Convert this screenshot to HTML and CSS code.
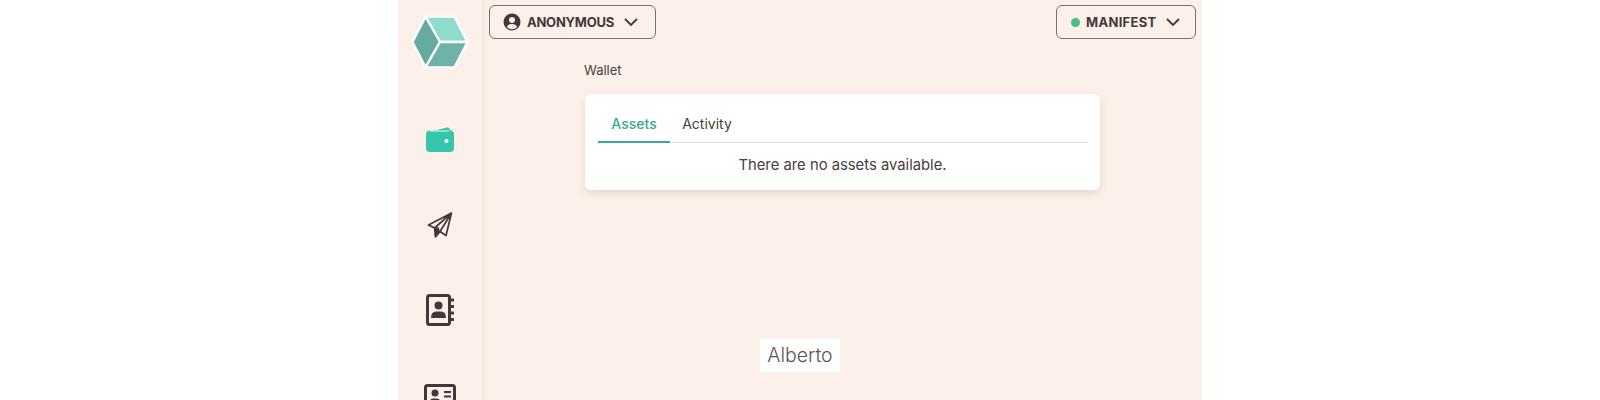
FILE: index.html
```html
<!DOCTYPE html>
<html lang="en">
<head>
    <meta charset="UTF-8">
    <meta name="viewport" content="width=device-width, initial-scale=1.0">
    <title>Wallet</title>
    <link rel="stylesheet" href="styles.css">
</head>
<body>
    <div class="app">
        <nav class="sidebar">
            <svg class="logo" width="58" height="54" viewBox="0 0 56 52">
                <polygon points="14,1.500 42,1.500 54.500,26 28,26" fill="#8fdccf" stroke="#fff" stroke-width="2.200"/>
                <polygon points="14,1.500 28,26 14,50.500 1.500,26" fill="#65aba0" stroke="#fff" stroke-width="2.200"/>
                <polygon points="28,26 54.500,26 42,50.500 14,50.500" fill="#6fb3a8" stroke="#fff" stroke-width="2.200"/>
            </svg>
            <svg class="nav-icon wallet" width="28" height="25" viewBox="0 0 28 25">
                <path d="M3 5 L21 0.500 Q23.500 0 24.500 4 Z" fill="#36c5ad"/>
                <rect x="0" y="3.500" width="28" height="21.500" rx="4" fill="#36c5ad"/>
                <path d="M4 4 H23" stroke="#e9f8f4" stroke-width="1"/>
                <circle cx="20.500" cy="14" r="2" fill="#fff"/>
            </svg>
            <svg class="nav-icon send" width="26" height="26" viewBox="0 0 26 26">
                <path d="M24.500 1 L1.500 13 L7.500 16 L8.500 25 L13 19.500 L19 23.500 Z M24.500 1 L7.500 16 M24.500 1 L13 19.500" fill="none" stroke="#46363a" stroke-width="1.700" stroke-linejoin="round"/>
                <path d="M7.500 16 L8.500 25 L13 19.500 L11.500 15 Z" fill="#46363a"/>
            </svg>
            <svg class="nav-icon book" width="28" height="32" viewBox="0 0 28 32">
                <rect x="1.500" y="1.500" width="22" height="29" rx="2" fill="none" stroke="#46363a" stroke-width="3"/>
                <circle cx="12.500" cy="11.500" r="4" fill="#46363a"/>
                <path d="M5 24 Q5 17.500 10 17.500 H15 Q20 17.500 20 24 Z" fill="#46363a"/>
                <path d="M25 6 H27 M25 12.500 H27 M25 19 H27 M25 25.500 H27" stroke="#46363a" stroke-width="3" stroke-linecap="round"/>
            </svg>
            <svg class="nav-icon card" width="32" height="26" viewBox="0 0 32 26">
                <rect x="1.500" y="1.500" width="29" height="23" rx="2" fill="none" stroke="#46363a" stroke-width="3"/>
                <circle cx="11" cy="9" r="3.500" fill="#46363a"/>
                <path d="M5 21 Q5 14.500 9 14.500 H13 Q17 14.500 17 21 Z" fill="#46363a"/>
                <path d="M20 8 H27 M20 12.500 H27 M20 17 H27" stroke="#46363a" stroke-width="2"/>
            </svg>
        </nav>
        <main class="main">
            <header class="topbar">
                <button class="pill pill-account">
                    <svg width="18" height="18" viewBox="0 0 18 18">
                        <circle cx="9" cy="9" r="8.500" fill="#46363a"/>
                        <circle cx="9" cy="7" r="3" fill="#fcf1ea"/>
                        <path d="M3.800 14 Q5 11 9 11 Q13 11 14.200 14 Q12 16.200 9 16.200 Q6 16.200 3.800 14 Z" fill="#fcf1ea"/>
                    </svg>
                    <span class="pill-user">ANONYMOUS</span>
                    <svg class="chev" width="14" height="8" viewBox="0 0 14 8">
                        <path d="M1 1 L7 7 L13 1" fill="none" stroke="#46363a" stroke-width="1.800"/>
                    </svg>
                </button>
                <button class="pill pill-net">
                    <i class="dot"></i>
                    <span>MANIFEST</span>
                    <svg class="chev" width="14" height="8" viewBox="0 0 14 8">
                        <path d="M1 1 L7 7 L13 1" fill="none" stroke="#46363a" stroke-width="1.800"/>
                    </svg>
                </button>
            </header>
            <section class="content">
                <h2 class="title">Wallet</h2>
                <div class="panel">
                    <div class="tabs">
                        <div class="tab active">Assets</div>
                        <div class="tab tab-next">Activity</div>
                    </div>
                    <p class="empty">There are no assets available.</p>
                </div>
            </section>
        </main>
    </div>
    <div class="caption">Alberto</div>
</body>
</html>
```
FILE: styles.css
```css
body {
    font-family: "Inter", "Noto Sans", sans-serif;
    background-color: #fff;
    color: #4a3c40;
    margin: 0;
    height: 400px;
    overflow: hidden;
}
.app {
    width: 804px;
    height: 400px;
    margin: 0 auto;
    display: flex;
    background-color: #fcf1ea;
    overflow: hidden;
}
.sidebar {
    width: 84px;
    flex-shrink: 0;
    display: flex;
    flex-direction: column;
    align-items: center;
    padding-top: 15px;
    box-sizing: border-box;
    box-shadow: 2px 0 6px rgba(120, 90, 80, 0.08);
}
.nav-icon {
    flex-shrink: 0;
}
.logo {
    flex-shrink: 0;
    margin-bottom: 58px;
}
.wallet {
    margin-bottom: 60px;
}
.send {
    margin-bottom: 56px;
}
.book {
    margin-bottom: 58px;
}
.main {
    flex: 1;
    min-width: 0;
}
.topbar {
    display: flex;
    justify-content: space-between;
    padding: 5px 6px 0 7px;
}
.pill {
    height: 34px;
    width: 167px;
    display: flex;
    align-items: center;
    gap: 6px;
    padding: 0 14px;
    box-sizing: border-box;
    background: transparent;
    border: 1px solid #7d6c6c;
    border-radius: 6px;
    font-family: inherit;
    font-size: 13px;
    font-weight: 700;
    letter-spacing: 0.3px;
    color: #46363a;
}
.pill-account {
    padding-left: 13px;
}
.pill-user {
    letter-spacing: -0.25px;
}
.pill-net {
    width: 140px;
}
.pill-net .chev {
    margin-left: 3px;
}
.chev {
    margin-left: 4px;
}
.dot {
    width: 9px;
    height: 9px;
    border-radius: 50%;
    background-color: #4dbd85;
}
.content {
    padding: 23px 102px 0 103px;
}
.title {
    margin: 0 0 16px -1px;
    font-size: 13px;
    line-height: 16px;
    font-weight: 400;
}
.panel {
    background-color: #fff;
    border-radius: 6px;
    padding: 14px 13px 0;
    height: 96px;
    box-sizing: border-box;
    box-shadow: 0 3px 8px rgba(120, 90, 80, 0.18);
}
.tabs {
    display: flex;
    border-bottom: 1px solid #dcdfe0;
}
.tab {
    width: 72px;
    height: 34px;
    line-height: 32px;
    box-sizing: border-box;
    text-align: center;
    font-size: 14px;
}
.tab.active {
    color: #3da891;
    font-weight: 500;
    border-bottom: 2px solid #3da891;
    margin-bottom: -1px;
    height: 35px;
}
.tab-next {
    margin-left: 1px;
}
.empty {
    margin: 13px 0 0;
    text-align: center;
    font-size: 14.800px;
    line-height: 18px;
}
.caption {
    position: absolute;
    left: 760px;
    top: 339px;
    width: 80px;
    height: 33px;
    line-height: 33px;
    text-align: center;
    background-color: #fff;
    font-size: 19.500px;
    font-weight: 300;
    color: #555;
}
```
